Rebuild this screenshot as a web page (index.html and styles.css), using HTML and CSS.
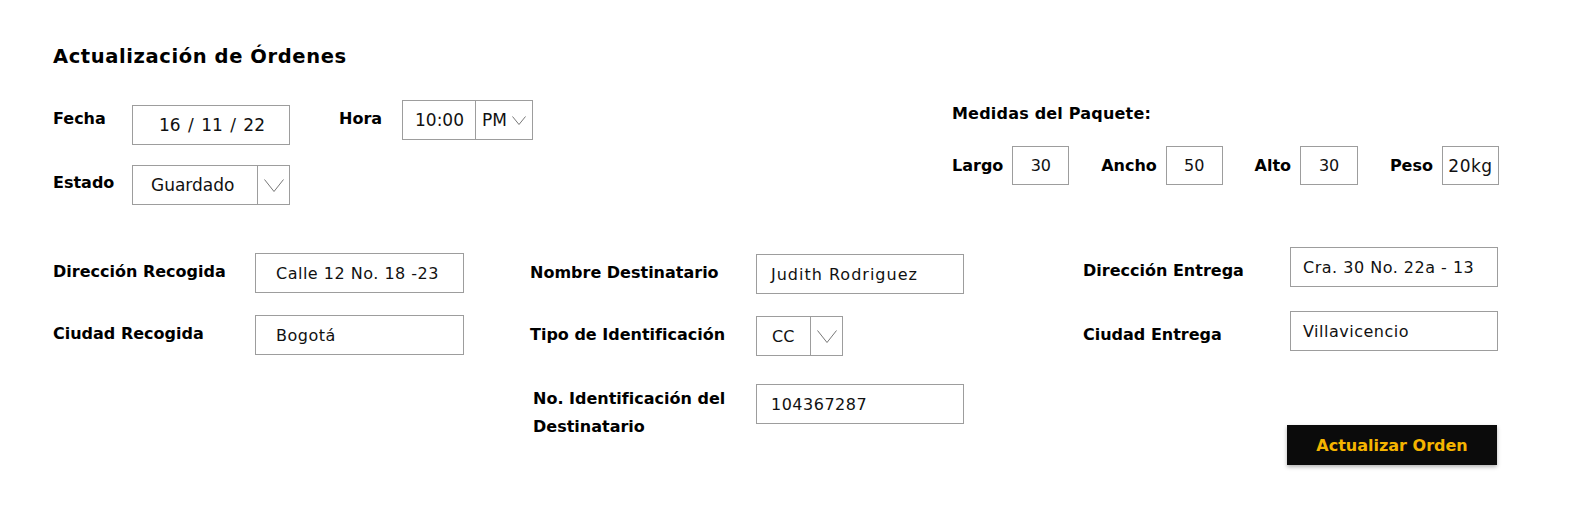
FILE: index.html
```html
<!DOCTYPE html>
<html lang="es">
<head>
<meta charset="utf-8">
<title>Actualización de Órdenes</title>
<link rel="stylesheet" href="styles.css">
</head>
<body>
<main class="page">
  <h1 class="title">Actualización de Órdenes</h1>

  <section class="top">
    <div class="general">
      <div class="row row-first">
        <span class="label label-fecha">Fecha</span>
        <div class="field field-fecha">16 / 11 / 22</div>
        <span class="label label-hora">Hora</span>
        <div class="field field-hora">
          <span class="hora-time">10:00</span>
          <span class="hora-ampm">PM
            <svg class="chev-small" width="14" height="9" viewBox="0 0 14 9"><polyline points="0.5,0.5 7,8.5 13.5,0.5" fill="none" stroke="#777" stroke-width="1"/></svg>
          </span>
        </div>
      </div>
      <div class="row row-estado">
        <span class="label label-estado">Estado</span>
        <div class="field select select-estado">
          <span class="select-value">Guardado</span>
          <span class="select-arrow">
            <svg width="20" height="13" viewBox="0 0 20 13"><polyline points="0.5,0.5 10,12.5 19.5,0.5" fill="none" stroke="#777" stroke-width="1"/></svg>
          </span>
        </div>
      </div>
    </div>

    <div class="package">
      <h2 class="label package-title">Medidas del Paquete:</h2>
      <div class="measures">
        <div class="measure"><span class="label">Largo</span><div class="field measure-box">30</div></div>
        <div class="measure"><span class="label">Ancho</span><div class="field measure-box">50</div></div>
        <div class="measure"><span class="label">Alto</span><div class="field measure-box measure-box-wide">30</div></div>
        <div class="measure"><span class="label">Peso</span><div class="field measure-box measure-box-weight">20kg</div></div>
      </div>
    </div>
  </section>

  <section class="details">
    <div class="column column-pickup">
      <div class="form-row">
        <span class="label form-label">Dirección Recogida</span>
        <div class="field form-input">Calle 12 No. 18 -23</div>
      </div>
      <div class="form-row">
        <span class="label form-label">Ciudad Recogida</span>
        <div class="field form-input">Bogotá</div>
      </div>
    </div>

    <div class="column column-recipient">
      <div class="form-row">
        <span class="label form-label">Nombre Destinatario</span>
        <div class="field form-input form-input-name">Judith Rodriguez</div>
      </div>
      <div class="form-row">
        <span class="label form-label">Tipo de Identificación</span>
        <div class="field select select-id">
          <span class="select-value">CC</span>
          <span class="select-arrow">
            <svg width="20" height="13" viewBox="0 0 20 13"><polyline points="0.5,0.5 10,12.5 19.5,0.5" fill="none" stroke="#777" stroke-width="1"/></svg>
          </span>
        </div>
      </div>
      <div class="form-row form-row-id">
        <span class="label form-label">No. Identificación del<br>Destinatario</span>
        <div class="field form-input">104367287</div>
      </div>
    </div>

    <div class="column column-delivery">
      <div class="form-row">
        <span class="label form-label">Dirección Entrega</span>
        <div class="field form-input">Cra. 30 No. 22a - 13</div>
      </div>
      <div class="form-row">
        <span class="label form-label">Ciudad Entrega</span>
        <div class="field form-input">Villavicencio</div>
      </div>
      <button class="btn" type="button">Actualizar Orden</button>
    </div>
  </section>
</main>
</body>
</html>
```

FILE: styles.css
```css
* {
  box-sizing: border-box;
  margin: 0;
  padding: 0;
}

html, body {
  background: #ffffff;
}

body {
  font-family: "DejaVu Sans", "Noto Sans", sans-serif;
  color: #000000;
}

.page {
  width: 1586px;
  height: 512px;
  padding: 45px 87px 0 53px;
}

.title {
  font-size: 19.5px;
  line-height: 24px;
  font-weight: 700;
  letter-spacing: 0.6px;
}

.label {
  font-size: 16px;
  line-height: 20px;
  font-weight: 700;
  color: #000;
}

.field {
  border: 1px solid #9d9d9d;
  height: 40px;
  display: flex;
  align-items: center;
  color: #111;
  font-size: 17px;
  font-weight: 400;
  background: #fff;
  white-space: nowrap;
}

/* ---------- top section ---------- */
.top {
  display: flex;
  justify-content: space-between;
  align-items: flex-start;
  margin-top: 31px;
}

.row {
  display: flex;
  align-items: flex-start;
}

.label-fecha {
  width: 79px;
  margin-top: 9px;
}

.field-fecha {
  width: 158px;
  margin-top: 5px;
  padding-left: 26px;
  word-spacing: 2px;
}

.label-hora {
  width: 63px;
  margin-left: 49px;
  margin-top: 9px;
}

.field-hora {
  width: 131px;
}

.hora-time {
  width: 73px;
  height: 100%;
  display: flex;
  align-items: center;
  padding-left: 12px;
  border-right: 1px solid #9d9d9d;
}

.hora-ampm {
  display: flex;
  align-items: center;
  gap: 5px;
  padding-left: 6px;
}

.row-estado {
  margin-top: 20px;
}

.label-estado {
  width: 79px;
  margin-top: 8px;
}

.select-estado {
  width: 158px;
}

.select-value {
  flex: 1;
  padding-left: 18px;
}

.select-arrow {
  width: 32px;
  height: 100%;
  border-left: 1px solid #9d9d9d;
  display: flex;
  align-items: center;
  justify-content: center;
}

.select-arrow svg {
  display: block;
}

.package {
  width: 547px;
  padding-top: 4px;
}

.package-title {
  white-space: nowrap;
  letter-spacing: 0.2px;
}

.measures {
  display: flex;
  justify-content: space-between;
  margin-top: 22px;
}

.measure {
  display: flex;
  align-items: center;
  gap: 9px;
}

.measure-box {
  width: 57px;
  height: 39px;
  justify-content: center;
  font-size: 16px;
}

.measure-box-wide {
  width: 58px;
}

.measure-box-weight {
  font-size: 17px;
  letter-spacing: 0.5px;
}

/* ---------- details section ---------- */
.details {
  display: grid;
  grid-template-columns: 477px 553px 416px;
  margin-top: 41px;
}

.column {
  display: flex;
  flex-direction: column;
  gap: 22px;
}

.form-row {
  display: flex;
  align-items: flex-start;
}

.form-label {
  margin-top: 9px;
  white-space: nowrap;
}

.form-input {
  font-size: 16px;
  letter-spacing: 0.5px;
}

.form-input-name {
  letter-spacing: 1px;
}

.column-pickup {
  padding-top: 7px;
}

.column-pickup .form-label {
  width: 202px;
}

.column-pickup .form-input {
  width: 209px;
  padding-left: 20px;
}

.column-recipient {
  padding-top: 8px;
}

.column-recipient .form-label {
  width: 226px;
}

.column-recipient .form-input {
  width: 208px;
  padding-left: 14px;
}

.form-row-id {
  margin-top: 6px;
}

.form-row-id .form-label {
  margin-top: 1px;
  line-height: 28px;
  padding-left: 3px;
}

.select-id {
  width: 87px;
  font-size: 16px;
}

.select-id .select-value {
  padding-left: 15px;
}

.column-delivery {
  padding-top: 1px;
  gap: 24px;
}

.column-delivery .form-label {
  width: 207px;
  margin-top: 14px;
}

.column-delivery .form-input {
  width: 208px;
  padding-left: 12px;
}

.btn {
  align-self: flex-end;
  margin-right: 2px;
  margin-top: 50px;
  width: 210px;
  height: 40px;
  border: none;
  background: #0b0b0b;
  color: #f5b400;
  font-family: "DejaVu Sans", "Noto Sans", sans-serif;
  font-size: 16px;
  font-weight: 700;
  box-shadow: 0 2px 4px rgba(0, 0, 0, 0.3);
  cursor: pointer;
}
```
